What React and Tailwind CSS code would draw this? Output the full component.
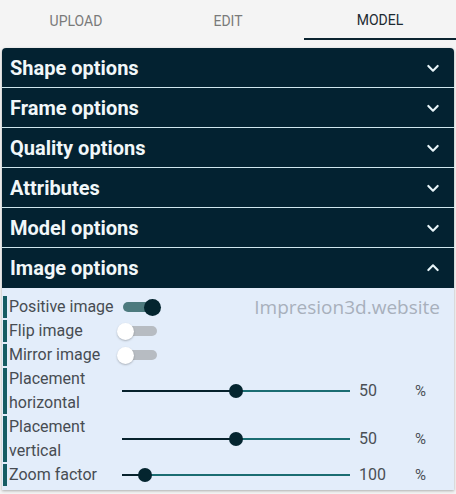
import React from 'react';

const sections = ['Shape options', 'Frame options', 'Quality options', 'Attributes', 'Model options'];

function Chevron({ up }) {
  return (
    <svg width="16" height="16" viewBox="0 0 24 24" fill="none" stroke="#e6f3f7" strokeWidth="3.2" strokeLinecap="round" strokeLinejoin="round">
      {up ? <path d="M5 15l7-7 7 7" /> : <path d="M5 9l7 7 7-7" />}
    </svg>
  );
}

function Toggle({ on }) {
  return (
    <div className="relative w-[36px] h-[18px] flex items-center">
      <div className={`w-[34px] h-[10px] ml-[1px] rounded-full ${on ? 'bg-[#4d7a7e]' : 'bg-[#b7bcc2]'}`} />
      {on ? (
        <div className="absolute right-[-3px] w-[17px] h-[17px] rounded-full bg-[#04252f]" />
      ) : (
        <div className="absolute left-[-5px] w-[17px] h-[17px] rounded-full bg-white shadow-[0_1px_2px_rgba(0,0,0,0.25)]" />
      )}
    </div>
  );
}

function Slider({ pct, value }) {
  return (
    <div className="flex items-center">
      <div className="relative w-[228px] h-[14px] flex items-center">
        <div className="h-[2px] bg-[#07222c]" style={{ width: `${pct}%` }} />
        <div className="h-[2px] flex-1 bg-[#1b6d72]" />
        <div className="absolute w-[14px] h-[14px] rounded-full bg-[#04252f] -translate-x-1/2" style={{ left: `${pct}%` }} />
      </div>
      <span className="ml-[9px] w-[56px] text-[16px] text-[#4a4f55]">{value}</span>
      <span className="text-[15px] text-[#4a4f55]">%</span>
    </div>
  );
}

function Row({ label, children, tall }) {
  return (
    <div className={`flex items-stretch ${tall ? 'h-[48px]' : 'h-[24px]'}`}>
      <div className="w-[4px] my-[1px] bg-[#155c63]" />
      <div className="w-[115px] pl-[2px] text-[16px] leading-[24px] text-[#474c52]">{label}</div>
      <div className="flex items-center">{children}</div>
    </div>
  );
}

export default function App() {
  return (
    <div className="w-[456px] h-[494px] bg-[#f4f4f4] overflow-hidden" style={{ fontFamily: 'Roboto, "Liberation Sans", sans-serif' }}>
      <div className="flex h-[40px]">
        <div className="flex-1 flex items-center justify-center text-[14px] text-[#7a7a7a] pt-[2px]">UPLOAD</div>
        <div className="flex-1 flex items-center justify-center text-[14px] text-[#7a7a7a] pt-[2px]">EDIT</div>
        <div className="flex-1 flex items-center justify-center text-[14px] text-[#1c2a31] border-b-2 border-[#0b2430] pt-[3px]">MODEL</div>
      </div>

      <div className="mt-[8px] mx-[2px] rounded-t-[4px] overflow-hidden shadow-[0_1px_3px_rgba(0,0,0,0.3)]">
        {sections.map((s) => (
          <div key={s} className="h-[40px] flex items-center justify-between pl-[8px] pr-[10px] bg-[#032231] border-b border-[#cfe6ee]">
            <span className="text-[20px] font-bold text-[#f1f7f9]">{s}</span>
            <span className="mr-[3px]"><Chevron /></span>
          </div>
        ))}
        <div className="h-[40px] flex items-center justify-between pl-[8px] pr-[10px] bg-[#032231]">
          <span className="text-[20px] font-bold text-[#f1f7f9]">Image options</span>
          <span className="mr-[3px]"><Chevron up /></span>
        </div>

        <div className="relative bg-[#e3edfa] pt-[7px] pb-[3px] pl-[1px]">
          <div className="absolute right-[14px] top-[5px] text-[19px] text-[#a8b0bc]" style={{ fontFamily: '"Open Sans", sans-serif' }}>
            Impresion3d.website
          </div>
          <Row label="Positive image"><Toggle on /></Row>
          <Row label="Flip image"><Toggle /></Row>
          <Row label="Mirror image"><Toggle /></Row>
          <Row label={<>Placement<br />horizontal</>} tall><Slider pct={50} value={50} /></Row>
          <Row label={<>Placement<br />vertical</>} tall><Slider pct={50} value={50} /></Row>
          <Row label="Zoom factor"><Slider pct={10} value={100} /></Row>
        </div>
      </div>
    </div>
  );
}
